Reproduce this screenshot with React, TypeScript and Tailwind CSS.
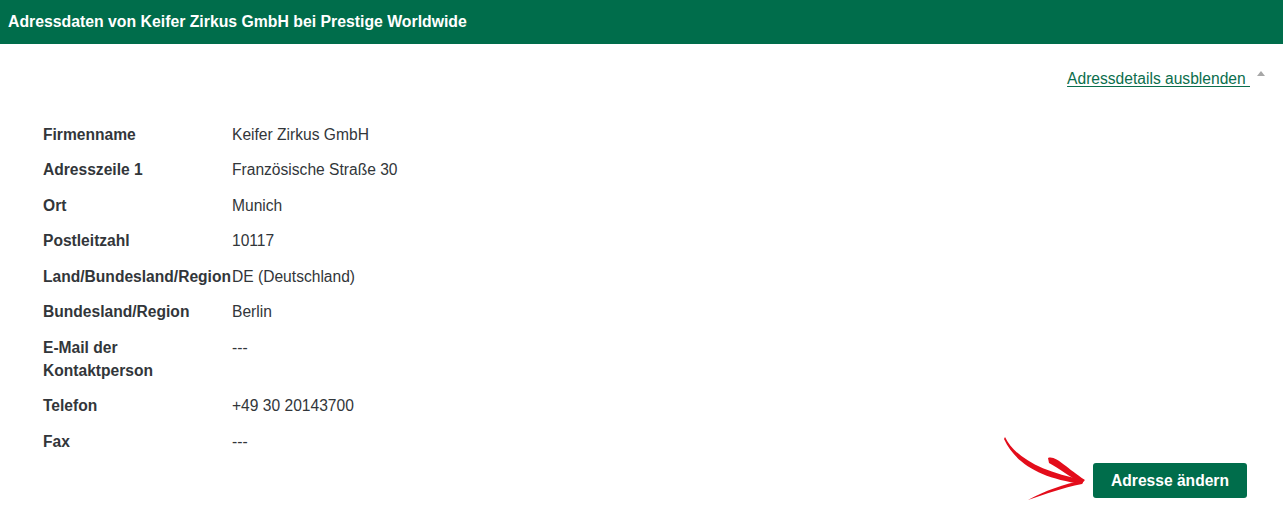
import React from 'react';

const ROWS: [string, string][] = [
  ['Firmenname', 'Keifer Zirkus GmbH'],
  ['Adresszeile 1', 'Französische Straße 30'],
  ['Ort', 'Munich'],
  ['Postleitzahl', '10117'],
  ['Land/Bundesland/Region', 'DE (Deutschland)'],
  ['Bundesland/Region', 'Berlin'],
  ['E-Mail der Kontaktperson', '---'],
  ['Telefon', '+49 30 20143700'],
  ['Fax', '---'],
];

const Arrow = () => (
  <svg
    className="absolute left-[-93px] top-[-33px]"
    width="92"
    height="74"
    viewBox="0 0 92 74"
    fill="#e30d1b"
  >
    {/* shaft */}
    <path d="M5,7 C14,26 40,42 84,50 L82,54 C40,48 16,34 4,9 Z" />
    {/* upper barb */}
    <path d="M48,28 C56,25 66,38 85,50 L81,54 C70,46 58,38 49,33 Z" />
    {/* lower barb */}
    <path d="M28,70 C44,61 64,54 84,50 L82,54 C62,58 46,64 28,70 Z" />
  </svg>
);

export default function App() {
  return (
    <div className="min-h-[527px] w-full bg-white font-['Liberation_Sans',Arial,sans-serif] text-[#32363a]">
      <div className="flex h-11 items-center bg-[#006d4b] px-2 text-[15.8px] font-bold text-white">
        Adressdaten von Keifer Zirkus GmbH bei Prestige Worldwide
      </div>

      <div className="pr-[18px] pt-[22.5px]">
        <div className="flex justify-end">
          <a
            href="#"
            className="text-[15.6px] leading-[23px] text-[#0b6e4c] underline underline-offset-2"
          >
            Adressdetails ausblenden&nbsp;
          </a>
          <span className="ml-[7px] mt-[4px] h-0 w-0 border-x-[4px] border-b-[5px] border-x-transparent border-b-[#a7a7a7]" />
        </div>
      </div>

      <div className="mt-[26.75px] pl-[43px]">
        {ROWS.map(([label, value]) => (
          <div key={label} className="flex py-[6.25px] text-[15.6px] leading-[23px]">
            <div className="w-[189px] shrink-0 pr-[4px] font-bold">
              {label === 'Land/Bundesland/Region' ? (
                <span className="whitespace-nowrap">{label}</span>
              ) : (
                label
              )}
            </div>
            <div>{value}</div>
          </div>
        ))}
      </div>

      <div className="mt-[4px] flex justify-end pr-[36px]">
        <div className="relative">
          <Arrow />
          <button className="h-[35px] w-[154px] rounded-[3px] bg-[#006d4b] text-[15.6px] font-bold text-white">
            Adresse ändern
          </button>
        </div>
      </div>
    </div>
  );
}
